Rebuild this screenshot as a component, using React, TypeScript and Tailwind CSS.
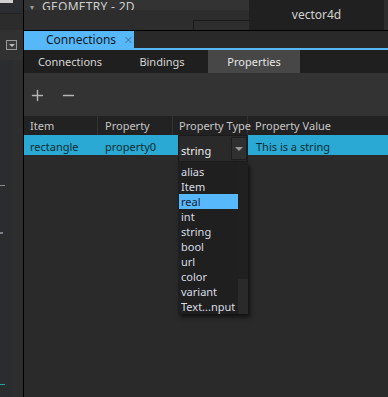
import { Plus, Minus, X } from "lucide-react";

const types = ["alias", "Item", "real", "int", "string", "bool", "url", "color", "variant", "Text...nput"];

function SubTab({ label, active }: { label: string; active?: boolean }) {
  return (
    <div
      className={
        "flex h-full items-center justify-center " +
        (active ? "bg-[#474747] text-[#e6e6e6]" : "text-[#d6d6d6]")
      }
    >
      {label}
    </div>
  );
}

export default function App() {
  return (
    <div
      className="relative flex h-[397px] w-[388px] overflow-hidden whitespace-nowrap bg-[#2a2a2a] text-[11px] leading-none"
      style={{ fontFamily: '"Noto Sans", "Open Sans", sans-serif' }}
    >
      {/* Left dock strip */}
      <div className="flex w-[24px] shrink-0 flex-col border-r border-black bg-[#2b2d30]">
        <div className="h-[14px] border-b border-[#222]">
          <div className="h-[3px] w-[13px] bg-[#cfcfcf]" />
        </div>
        <div className="h-[16px] bg-[#2c2c2c]" />
        <div className="flex h-[30px] items-center justify-center bg-[#313131]">
          <div className="flex h-[10px] w-[11px] items-center justify-center border border-[#9a9a9a] bg-[#3a3a3a]">
            <div className="h-0 w-0 border-x-[3px] border-t-[3px] border-x-transparent border-t-[#bdbdbd]" />
          </div>
        </div>
        <div className="flex flex-1">
          <div className="w-[13px] bg-[#2a2c2e]">
            <div className="mt-[125px] h-px w-[5px] bg-[#8a8a8a]" />
            <div className="mt-[46px] h-[2px] w-[3px] bg-[#7a7f88]" />
            <div className="mt-[150px] h-px w-[5px] bg-[#1fa39a]" />
          </div>
          <div className="flex-1 bg-[#2e2e2e]" />
        </div>
      </div>

      {/* Main column */}
      <div className="flex min-w-0 flex-1 flex-col">
        {/* Upper panels */}
        <div className="flex h-[30px] bg-[#2d2d2d]">
          <div className="flex flex-1 flex-col">
            <div className="flex h-[10px] items-end gap-[8px] overflow-hidden bg-[#333] pl-[6px] text-[12px] text-[#cfcfcf]">
              <span className="mb-[-1px] text-[8px] text-[#9a9a9a]">▾</span>
              <span className="mb-[-3px] tracking-[0.3px]">GEOMETRY - 2D</span>
            </div>
            <div className="flex flex-1 items-end justify-end">
              <div className="h-[10px] w-[56px] border-l border-t border-[#1a1a1a]" />
            </div>
          </div>
          <div className="flex w-[135px] items-center justify-center bg-[#202020] pb-[1px] text-[12px] text-[#d2d2d2]">
            vector4d
          </div>
          <div className="w-[4px]" />
        </div>
        <div className="h-px bg-black" />

        {/* Dock tab bar */}
        <div className="flex h-[17px] bg-[#292929]">
          <div className="flex w-[110px] items-center gap-[7px] bg-[#56b7f9] pl-[22px] text-[12px] text-[#141a22]">
            Connections
            <X size={12} strokeWidth={1.3} className="text-[#2a3f55]" />
          </div>
        </div>
        <div className="h-[2px] bg-[#56b7f9]" />

        {/* Sub tabs */}
        <div className="grid h-[23px] grid-cols-[92px_92px_92px] bg-[#1f1f1f]">
          <SubTab label="Connections" />
          <SubTab label="Bindings" />
          <SubTab label="Properties" active />
        </div>

        {/* Toolbar */}
        <div className="flex h-[43px] items-center gap-[14px] bg-[#333] pl-[5px] pt-[1px]">
          <Plus size={17} strokeWidth={2} className="text-[#b4b4b4]" />
          <Minus size={17} strokeWidth={2} className="text-[#b4b4b4]" />
        </div>

        {/* Table header */}
        <div className="grid h-[19px] grid-cols-[74px_75px_75px_1fr] bg-[#222] text-[#c6c6c6]">
          <div className="flex items-center border-r border-[#333] pl-[6px]">Item</div>
          <div className="flex items-center border-r border-[#333] pl-[7px]">Property</div>
          <div className="flex items-center border-r border-[#333] pl-[6px]">Property Type</div>
          <div className="flex items-center pl-[7px]">Property Value</div>
        </div>

        {/* Selected row */}
        <div className="grid h-[20px] grid-cols-[74px_75px_75px_1fr] bg-[#29a9d4] text-[#0e2c30]">
          <div className="flex items-center pl-[6px] pt-[2px]">rectangle</div>
          <div className="flex items-center pl-[7px] pt-[2px]">property0</div>
          <div />
          <div className="flex items-center pl-[8px] pt-[2px]">This is a string</div>
        </div>
      </div>

      {/* Type editor + popup list */}
      <div className="absolute left-[178px] top-[135px] w-[70px]">
        <div className="flex h-[27px] border border-[#1b1b1b] bg-[#2a2a2a]">
          <div className="flex flex-1 items-center pl-[2px] pt-[3px] text-[#ececec]">string</div>
          <div className="my-[1px] flex w-[16px] items-center justify-center border border-[#1e1e1e] bg-[#303030]">
            <div className="h-0 w-0 border-x-[4px] border-t-[4px] border-x-transparent border-t-[#9a9a9a]" />
          </div>
        </div>
        <div className="flex h-[152px] bg-[#1f1f1f] shadow-[2px_3px_4px_rgba(0,0,0,0.6)]">
          <div className="flex flex-1 flex-col pl-[1px] pt-[2px]">
            {types.map((t) => (
              <div
                key={t}
                className={
                  "flex h-[15px] items-center pl-[2px] leading-[15px] " +
                  (t === "real" ? "bg-[#58b8fc] text-[#16222e]" : "text-[#d8dde4]")
                }
              >
                {t}
              </div>
            ))}
          </div>
          <div className="flex w-[10px] flex-col justify-end bg-[#202020]">
            <div className="h-[35px] bg-[#2a2a2a]" />
          </div>
        </div>
      </div>
    </div>
  );
}
